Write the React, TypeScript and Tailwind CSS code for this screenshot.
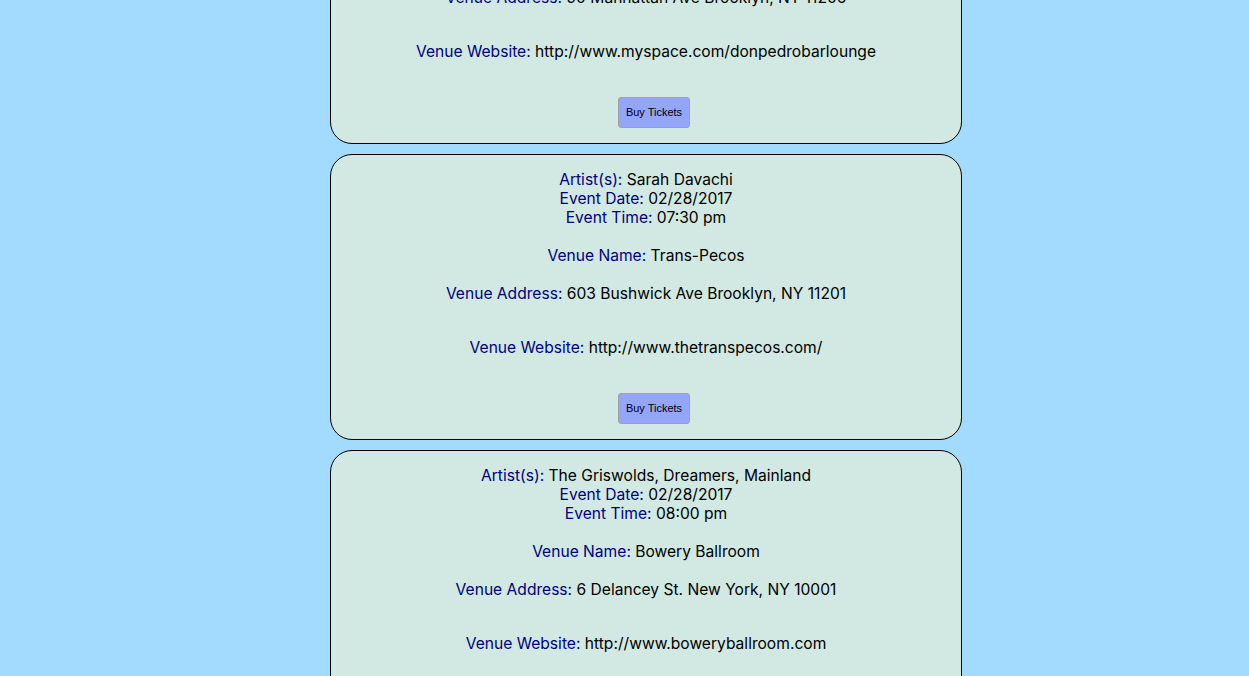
const events = [
  {
    artists: 'Eaves Wilder, The Sun Says',
    date: '02/28/2017',
    time: '07:00 pm',
    venue: 'Don Pedro',
    address: '90 Manhattan Ave Brooklyn, NY 11206',
    website: 'http://www.myspace.com/donpedrobarlounge',
  },
  {
    artists: 'Sarah Davachi',
    date: '02/28/2017',
    time: '07:30 pm',
    venue: 'Trans-Pecos',
    address: '603 Bushwick Ave Brooklyn, NY 11201',
    website: 'http://www.thetranspecos.com/',
  },
  {
    artists: 'The Griswolds, Dreamers, Mainland',
    date: '02/28/2017',
    time: '08:00 pm',
    venue: 'Bowery Ballroom',
    address: '6 Delancey St. New York, NY 10001',
    website: 'http://www.boweryballroom.com',
  },
];

function Field({ label, value }: { label: string; value: string }) {
  return (
    <div>
      <span className="text-[#000080]">{label}: </span>
      {value}
    </div>
  );
}

export default function App() {
  return (
    <div className="min-h-screen bg-[#a3dbff] overflow-hidden">
      <div className="-mt-[142px] ml-[330px] w-[632px] flex flex-col gap-[10px] pb-4">
        {events.map((e) => (
          <div
            key={e.venue}
            className="border border-black rounded-[22px] bg-[#d1e9e2] pt-[15px] pb-[15px] text-center text-black text-[15.6px] leading-[19px] font-['Inter',sans-serif]"
          >
            <Field label="Artist(s)" value={e.artists} />
            <Field label="Event Date" value={e.date} />
            <Field label="Event Time" value={e.time} />
            <div className="mt-[19px]">
              <Field label="Venue Name" value={e.venue} />
            </div>
            <div className="mt-[19px]">
              <Field label="Venue Address" value={e.address} />
            </div>
            <div className="mt-[35px]">
              <Field label="Venue Website" value={e.website} />
            </div>
            <div className="mt-[36px] flex justify-center">
              <button className="ml-[16px] w-[72px] h-[31px] bg-[#94a5fc] border border-[#a0a0b0] rounded-[3px] text-[11px] text-black font-['Liberation_Sans',sans-serif]">
                Buy Tickets
              </button>
            </div>
          </div>
        ))}
      </div>
    </div>
  );
}
